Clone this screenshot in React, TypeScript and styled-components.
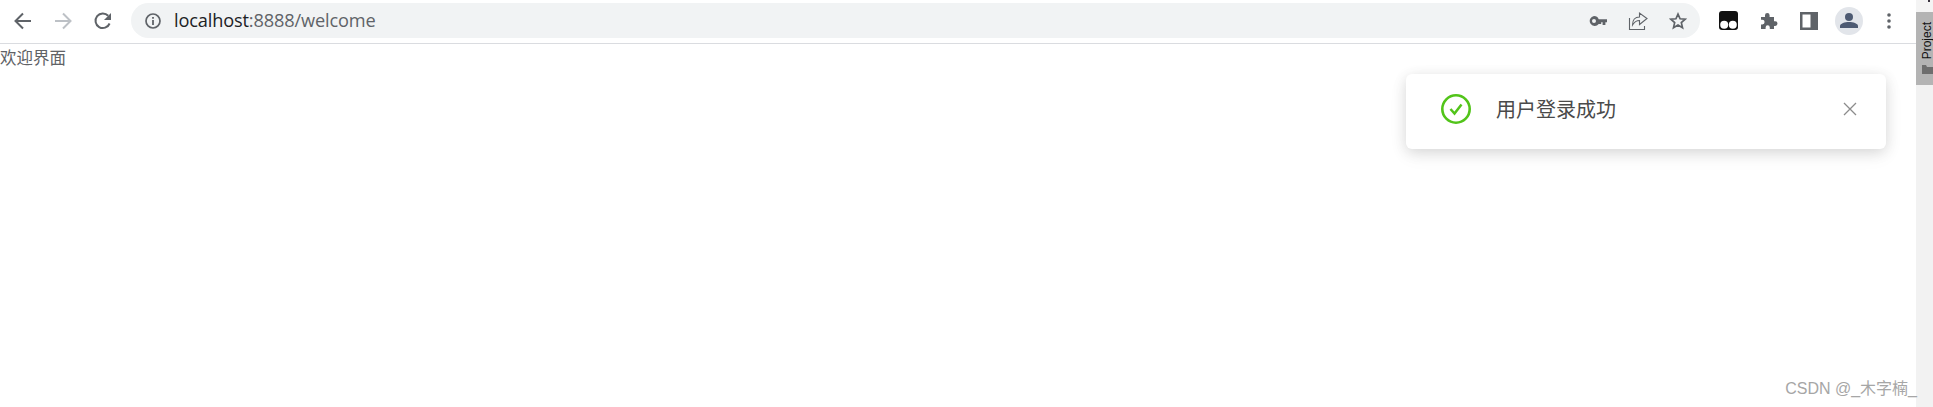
import React from 'react';
import styled, { createGlobalStyle } from 'styled-components';

const GlobalStyle = createGlobalStyle`
  html, body { margin: 0; padding: 0; background: #fff; overflow: hidden; }
  #root { height: 407px; }
`;

const Page = styled.div`
  position: relative;
  display: flex;
  width: 1933px;
  height: 407px;
  overflow: hidden;
`;

const Browser = styled.div`
  display: flex;
  flex-direction: column;
  width: 1916px;
`;

const Toolbar = styled.div`
  display: flex;
  align-items: center;
  box-sizing: border-box;
  height: 44px;
  padding: 3px 0 5px 11px;
  border-bottom: 1px solid #dadce0;
`;

const NavButton = styled.div`
  display: flex;
  align-items: center;
  justify-content: center;
  width: 24px;
  height: 24px;
  margin-right: 16px;
  svg { display: block; }
`;

const Omnibox = styled.div`
  display: flex;
  align-items: center;
  box-sizing: border-box;
  width: 1569px;
  height: 35px;
  padding: 0 0 0 14px;
  border-radius: 18px;
  background: #f1f3f4;
`;

const Url = styled.div`
  margin-left: 13px;
  font: 18.2px/35px "Open Sans", "Liberation Sans", sans-serif;
  letter-spacing: -0.15px;
  color: #5f6368;
  b { font-weight: 400; color: #202124; }
`;

const OmniActions = styled.div`
  display: flex;
  align-items: center;
  gap: 15px;
  margin-left: auto;
  margin-right: 10px;
`;

const ActionSlot = styled.div`
  display: flex;
  align-items: center;
  justify-content: center;
  width: 25px;
  height: 25px;
`;

const ExtButtons = styled.div`
  display: flex;
  align-items: center;
  margin-left: 8px;
`;

const ExtSlot = styled.div<{ $w: number }>`
  display: flex;
  align-items: center;
  justify-content: center;
  width: ${(p) => p.$w}px;
  height: 30px;
`;

const Avatar = styled.div`
  display: flex;
  align-items: center;
  justify-content: center;
  width: 28px;
  height: 28px;
  border-radius: 50%;
  background: #e2e5ea;
`;

const Content = styled.div`
  flex: 1;
  font: 16.5px/26px "Noto Sans CJK SC", sans-serif;
  color: #606266;
`;

const Strip = styled.div`
  display: flex;
  flex-direction: column;
  width: 17px;
  background: #f2f2f2;
`;

const StripTop = styled.div`
  height: 12px;
  background: #f4f4f4;

  &::after {
    content: "";
    display: block;
    width: 2px;
    height: 2px;
    margin-left: 12px;
    background: #3a3440;
  }
`;

const ProjectTab = styled.div`
  display: flex;
  flex-direction: column;
  align-items: flex-end;
  justify-content: flex-end;
  gap: 6px;
  box-sizing: border-box;
  height: 73px;
  padding: 0 0 11px;
  background: #b4b4b4;
`;

const ProjectLabel = styled.span`
  writing-mode: vertical-rl;
  transform: rotate(180deg);
  font: 12px/11px "Liberation Sans", sans-serif;
  color: #111;
`;

const Notification = styled.div`
  position: absolute;
  top: 74px;
  left: 1406px;
  display: flex;
  align-items: center;
  box-sizing: border-box;
  width: 480px;
  height: 75px;
  padding: 0 29px 5px 35px;
  border-radius: 6px;
  background: #fff;
  box-shadow: 0 3px 14px rgba(0, 0, 0, 0.12), 0 6px 20px rgba(0, 0, 0, 0.06);
`;

const Message = styled.div`
  flex: 1;
  margin-left: 25px;
  font: 20px/30px "Noto Sans CJK SC", sans-serif;
  color: #4a4a4a;
`;

const Watermark = styled.div`
  position: absolute;
  right: 16px;
  bottom: 7px;
  font: 16px/22px "Liberation Sans", "Noto Sans CJK SC", sans-serif;
  color: #a6a6a6;
`;

const App: React.FC = () => (
  <Page>
    <GlobalStyle />
    <Browser>
      <Toolbar>
        <NavButton>
          <svg width="20" height="20" viewBox="0 0 20 20" fill="none" stroke="#5f6368" strokeWidth="2">
            <path d="M18 10H3M10 2.5 2.5 10l7.5 7.5" />
          </svg>
        </NavButton>
        <NavButton>
          <svg width="20" height="20" viewBox="0 0 20 20" fill="none" stroke="#bdc1c6" strokeWidth="2">
            <path d="M2 10h15M10 2.5l7.5 7.5-7.5 7.5" />
          </svg>
        </NavButton>
        <NavButton>
          <svg width="20" height="20" viewBox="0 0 20 20" fill="none">
            <path d="M16.6 12.5A7.3 7.3 0 1 1 15.2 4.8" stroke="#5f6368" strokeWidth="2" />
            <path d="M18 2v7h-7z" fill="#5f6368" />
          </svg>
        </NavButton>
        <Omnibox>
          <svg width="16" height="16" viewBox="0 0 16 16" fill="none">
            <circle cx="8" cy="8" r="7" stroke="#5f6368" strokeWidth="1.7" />
            <path d="M8 7v5M8 4v1.7" stroke="#5f6368" strokeWidth="1.8" />
          </svg>
          <Url>
            <b>localhost</b>:8888/welcome
          </Url>
          <OmniActions>
            <ActionSlot>
              <svg width="18" height="10" viewBox="0 0 18 10">
                <path d="M5 0a5 5 0 0 1 4.7 3.2H18v3h-1.6V9h-2.8V6.200h-1.400V8H9.700A5 5 0 1 1 5 0Zm0 3a2 2 0 1 0 0 4 2 2 0 0 0 0-4Z" fill="#5f6368" fillRule="evenodd" />
              </svg>
            </ActionSlot>
            <ActionSlot>
              <svg width="20" height="20" viewBox="0 0 20 20" fill="none" stroke="#5f6368" strokeWidth="1.1">
                <path d="M1.500 7v11.500h15V15" />
                <path d="M11.500 2v4C7 6 4.500 9 4.500 14c2-3.500 4-4.500 7-4.500v4l7.500-6z" />
              </svg>
            </ActionSlot>
            <ActionSlot>
              <svg width="18" height="18" viewBox="0 0 20 20" fill="none" stroke="#5f6368" strokeWidth="1.900">
                <path d="m10 2.300 2.300 5.200 5.700.5-4.300 3.800 1.300 5.600-5-3-5 3 1.300-5.600L2 8l5.700-.5z" />
              </svg>
            </ActionSlot>
          </OmniActions>
        </Omnibox>
        <ExtButtons>
          <ExtSlot $w={40}>
            <svg width="19" height="19" viewBox="0 0 19 19">
              <rect width="19" height="19" rx="3" fill="#111" />
              <circle cx="5.200" cy="13.800" r="4" fill="#fff" />
              <circle cx="13.800" cy="13.800" r="4" fill="#fff" />
            </svg>
          </ExtSlot>
          <ExtSlot $w={42}>
            <svg width="18" height="18" viewBox="0 0 18 18">
              <path d="M1 5h4V3.200a2.300 2.300 0 0 1 4.600 0V5H14v4.300h1.200a2.300 2.300 0 0 1 0 4.600H14V17H9.800v-1.600a2.100 2.100 0 0 0-4.200 0V17H1v-4.600h1.300a2.300 2.300 0 0 0 0-4.600H1z" fill="#5f6368" />
            </svg>
          </ExtSlot>
          <ExtSlot $w={38}>
            <svg width="18" height="18" viewBox="0 0 18 18">
              <path d="M0 0h18v18H0zm2.500 2.500v13h8v-13z" fill="#5f6368" fillRule="evenodd" />
            </svg>
          </ExtSlot>
          <ExtSlot $w={42}>
            <Avatar>
              <svg width="18" height="15" viewBox="0 0 18 15">
                <circle cx="9" cy="4" r="4" fill="#4d5a72" />
                <path d="M0 15v-2c0-2.500 5-4 9-4s9 1.500 9 4v2z" fill="#4d5a72" />
              </svg>
            </Avatar>
          </ExtSlot>
          <ExtSlot $w={38}>
            <svg width="4" height="16" viewBox="0 0 4 16">
              <circle cx="2" cy="2" r="1.800" fill="#5f6368" />
              <circle cx="2" cy="8" r="1.800" fill="#5f6368" />
              <circle cx="2" cy="14" r="1.800" fill="#5f6368" />
            </svg>
          </ExtSlot>
        </ExtButtons>
      </Toolbar>
      <Content>欢迎界面</Content>
    </Browser>
    <Strip>
      <StripTop />
      <ProjectTab>
        <ProjectLabel>Project</ProjectLabel>
        <svg width="11" height="9" viewBox="0 0 11 9">
          <path d="M0 0h4l1 2h6v7H0z" fill="#6e6e6e" />
        </svg>
      </ProjectTab>
    </Strip>
    <Notification>
      <svg width="30" height="30" viewBox="0 0 30 30" fill="none" stroke="#52c41a">
        <circle cx="15" cy="15" r="13.700" strokeWidth="2.600" />
        <path d="m9.500 15 4 4.500 7-9" strokeWidth="2.500" />
      </svg>
      <Message>用户登录成功</Message>
      <svg width="14" height="14" viewBox="0 0 14 14" fill="none" stroke="#8c8c8c" strokeWidth="1.300">
        <path d="M1 1l12 12M13 1 1 13" />
      </svg>
    </Notification>
    <Watermark>CSDN @_木字楠_</Watermark>
  </Page>
);

export default App;
